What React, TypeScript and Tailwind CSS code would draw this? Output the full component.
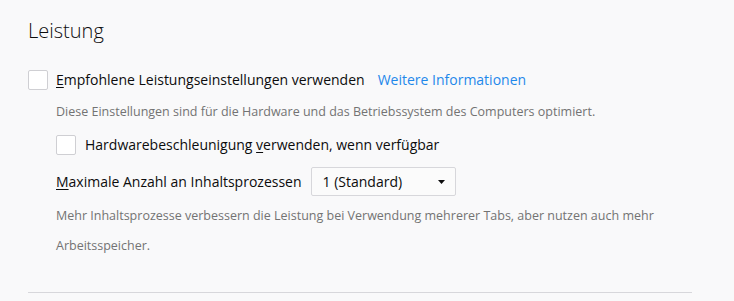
import React from "react";

function Checkbox() {
  return (
    <span className="box-border block h-5 w-5 shrink-0 rounded-[2px] border border-[#cfcfd3] bg-white" />
  );
}

export default function App() {
  return (
    <div className="box-border h-[301px] w-[734px] overflow-hidden bg-[#f9f9fa] pl-[28px] pr-[42px] pt-[17px] font-['Open_Sans',sans-serif] text-[#0c0c0d]">
      <h1 className="text-[20px] font-light leading-[28px]">Leistung</h1>

      <div className="mt-[25px] flex h-5 items-center text-[14px] leading-5">
        <Checkbox />
        <span className="ml-2">
          <span className="underline underline-offset-2">E</span>mpfohlene Leistungseinstellungen verwenden
        </span>
        <span className="ml-[13px] text-[#1f88ea]">Weitere Informationen</span>
      </div>

      <div className="pl-[28px]">
        <p className="mt-[12px] text-[12.5px] leading-5 text-[#737373]">
          Diese Einstellungen sind für die Hardware und das Betriebssystem des Computers optimiert.
        </p>

        <div className="mt-[13px] flex h-5 items-center text-[14px] leading-5">
          <Checkbox />
          <span className="ml-[9px]">
            Hardwarebeschleunigung <span className="underline underline-offset-2">v</span>erwenden, wenn verfügbar
          </span>
        </div>

        <div className="mt-[12px] flex h-[29px] items-center text-[14px] leading-5">
          <span className="pt-[1px]">
            <span className="underline underline-offset-2">M</span>aximale Anzahl an Inhaltsprozessen
          </span>
          <div className="ml-[9px] box-border flex h-[29px] w-[145px] items-center justify-between rounded-[2px] border border-[#d7d7db] bg-[#fbfbfb] pl-[11px] pr-[10px]">
            <span className="pt-[1px]">1 (Standard)</span>
            <svg width="7" height="4" viewBox="0 0 7 4" className="mt-[1px]">
              <path d="M0 0 H7 L3.5 4 Z" fill="#0c0c0d" />
            </svg>
          </div>
        </div>

        <p className="mt-[5px] text-[12.5px] leading-[30px] text-[#737373]">
          Mehr Inhaltsprozesse verbessern die Leistung bei Verwendung mehrerer Tabs, aber nutzen auch mehr Arbeitsspeicher.
        </p>
      </div>

      <div className="mt-[31px] h-px bg-[#d7d7db]" />
    </div>
  );
}
